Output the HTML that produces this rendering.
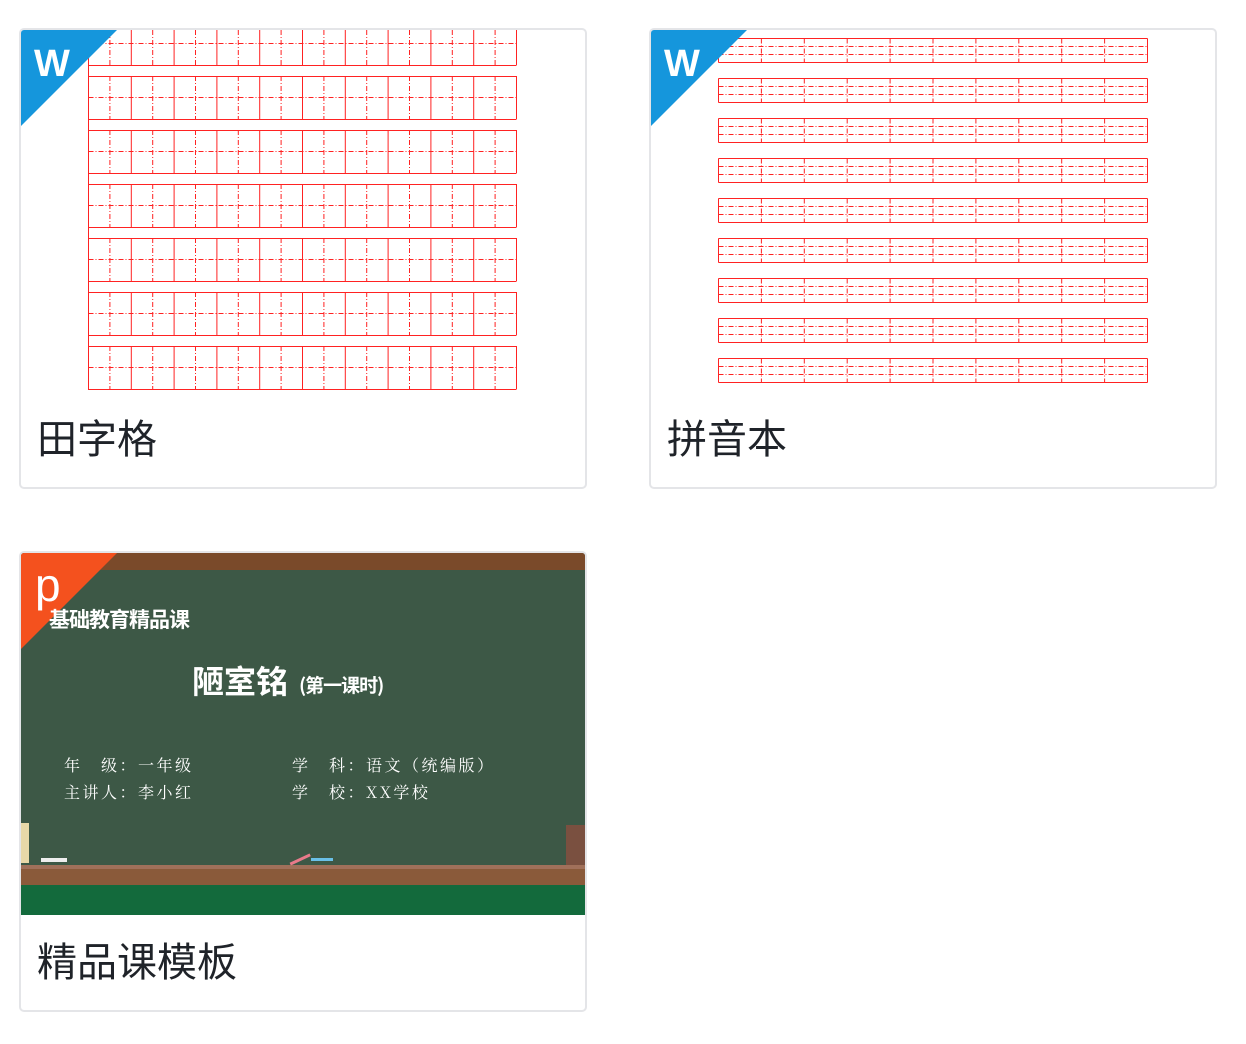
<!DOCTYPE html>
<html><head><meta charset="utf-8"><style>
body{margin:0;width:1246px;height:1044px;background:#fff;position:relative;overflow:hidden;font-family:"Liberation Sans","Noto Sans CJK SC",sans-serif}
.card{position:absolute;width:564px;height:457px;border:2px solid #e4e5e8;border-radius:5px;background:#fff;overflow:hidden}
.t{position:absolute;left:16px;font-size:40px;color:#1f2329;line-height:1}
svg{position:absolute;left:0;top:0}
</style></head><body>
<div class="card" style="left:19px;top:28px"><svg id="s1" width="564" height="380"></svg><div class="t" style="top:390px">田字格</div></div>
<div class="card" style="left:649px;top:28px"><svg id="s2" width="564" height="380"></svg><div class="t" style="top:390px">拼音本</div></div>
<div class="card" style="left:19px;top:551px">
<svg width="564" height="362">
<rect x="0" y="0" width="564" height="362" fill="#3d5846"/>
<rect x="0" y="0" width="564" height="17" fill="#7a4a2a"/>
<rect x="0" y="312" width="564" height="20" fill="#8a5a3a"/>
<rect x="0" y="312" width="564" height="4" fill="#a0705a"/>
<rect x="0" y="332" width="564" height="30" fill="#136a3c"/>
<polygon points="0,0 96,0 0,96" fill="#f4511e"/>
<text x="14" y="48" font-size="46" fill="#fff" font-family="Liberation Sans">p</text>
<text x="28" y="74" font-size="21" font-weight="bold" fill="#fff" font-family="Noto Sans CJK SC" letter-spacing="-1">基础教育精品课</text>
<text x="171" y="140" font-size="32" font-weight="bold" fill="#fff" font-family="Noto Sans CJK SC">陋室铭</text>
<text x="278" y="139" font-size="19" font-weight="bold" fill="#fff" font-family="Noto Sans CJK SC" letter-spacing="-1">(第一课时)</text>
<g font-size="16" fill="#fff" font-family="Noto Serif CJK SC" letter-spacing="2.5">
<text x="43" y="218">年　级：一年级</text>
<text x="43" y="245">主讲人：李小红</text>
<text x="271" y="218">学　科：语文（统编版）</text>
<text x="271" y="245">学　校：XX学校</text>
</g>
<rect x="268" y="305" width="22" height="3" fill="#e87a8a" transform="rotate(-25 279 306)"/>
<rect x="290" y="305" width="22" height="3" fill="#6ac0e8"/>
<rect x="20" y="305" width="26" height="4" fill="#eee"/>
<rect x="0" y="270" width="8" height="40" fill="#e8d8a8"/>
<rect x="545" y="272" width="19" height="40" fill="#7a5040"/>
</svg>
<div class="t" style="top:390px">精品课模板</div></div>
<script>
(function(){
var ns="http://www.w3.org/2000/svg";
function L(s,a,b,c,d,dash){var l=document.createElementNS(ns,"line");l.setAttribute("x1",a);l.setAttribute("y1",b);l.setAttribute("x2",c);l.setAttribute("y2",d);l.setAttribute("stroke","#f22");l.setAttribute("stroke-width","1");if(dash)l.setAttribute("stroke-dasharray","5,2,1,2");s.appendChild(l);}
function badge(s){var p=document.createElementNS(ns,"polygon");p.setAttribute("points","0,0 96,0 0,96");p.setAttribute("fill","#1596dc");s.appendChild(p);var t=document.createElementNS(ns,"text");t.setAttribute("x","13");t.setAttribute("y","46");t.setAttribute("font-size","38");t.setAttribute("font-weight","bold");t.setAttribute("fill","#fff");t.textContent="W";s.appendChild(t);}
var s1=document.getElementById("s1");
var gx0=67.5,w=42.8,gx1=gx0+428;
L(s1,gx0,0,gx0,360);
for(var r=0;r<7;r++){var tp=-8+r*54,bt=tp+43;
L(s1,gx0,bt+.5,gx1,bt+.5);if(r>0)L(s1,gx0,tp+.5,gx1,tp+.5);
L(s1,gx0,tp+21.5,gx1,tp+21.5,1);
for(var c=0;c<=10;c++){L(s1,gx0+c*w,Math.max(tp,0),gx0+c*w,bt);if(c<10)L(s1,gx0+c*w+21.4,Math.max(tp,0),gx0+c*w+21.4,bt,1);}}
badge(s1);
var s2=document.getElementById("s2");
var px0=67.5,px1=496.5;
for(var r2=0;r2<9;r2++){var tp2=8.5+r2*40,bt2=tp2+24;
L(s2,px0,tp2,px1,tp2);L(s2,px0,bt2,px1,bt2);L(s2,px0,tp2,px0,bt2);L(s2,px1,tp2,px1,bt2);
L(s2,px0,tp2+8,px1,tp2+8,1);L(s2,px0,tp2+16,px1,tp2+16,1);
for(var c2=1;c2<10;c2++){L(s2,px0+c2*42.9,tp2,px0+c2*42.9,bt2,1);}}
badge(s2);
})();
</script>
</body></html>
